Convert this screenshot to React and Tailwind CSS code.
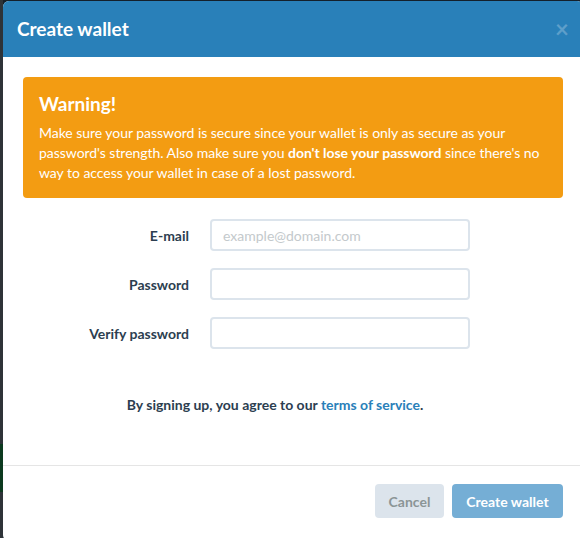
export default function App() {
  return (
    <div className="flex w-[580px] h-[538px] overflow-hidden bg-[#14202b] font-['Lato','Noto_Sans',sans-serif]">
      <div className="flex w-[3px] flex-none flex-col">
        <div className="h-[444px] bg-[#2e3338]" />
        <div className="h-[48px] bg-[#0c3a1f]" />
        <div className="flex-1 bg-[#2e3338]" />
      </div>
      <div className="mt-[1px] flex h-[540px] w-[580px] flex-none flex-col overflow-hidden rounded-[6px] bg-white">
        <div className="flex h-[56px] flex-none items-center justify-between bg-[#2980b9] pl-[14px] pr-[14px]">
          <h4 className="text-[19px] font-bold text-white">Create wallet</h4>
          <button type="button" className="text-[24px] font-bold leading-none text-white/25">
            ×
          </button>
        </div>

        <div className="px-[20px] pt-[20px]">
          <div className="rounded-[4px] bg-[#f39c12] px-[16px] pt-[14px] pb-[15px] text-white">
            <h4 className="text-[19px] font-bold leading-[26px]">Warning!</h4>
            <p className="mt-[6px] text-[14px] leading-[20px] tracking-[-0.04px]">
              Make sure your password is secure since your wallet is only as secure as your
              password's strength. Also make sure you <strong>don't lose your password</strong> since
              there's no way to access your wallet in case of a lost password.
            </p>
          </div>

          <form className="mt-[21px] flex flex-col gap-[17px]">
            {[
              { label: "E-mail", type: "email", placeholder: "example@domain.com" },
              { label: "Password", type: "password" },
              { label: "Verify password", type: "password" },
            ].map((f) => (
              <div key={f.label} className="flex items-center">
                <label className="w-[168px] pr-[2px] text-right text-[14px] font-bold text-[#2c3e50]">
                  {f.label}
                </label>
                <input
                  type={f.type}
                  placeholder={f.placeholder}
                  className="ml-[19px] h-[32px] w-[260px] rounded-[4px] border-2 border-[#dce4ec] px-[11px] text-[14px] text-[#2c3e50] outline-none placeholder:text-[#c4c9cc]"
                />
              </div>
            ))}
          </form>

          <p className="mt-[46px] mr-[36px] text-center text-[14px] font-bold leading-[20px] text-[#2c3e50]">
            By signing up, you agree to our{" "}
            <a className="text-[#2980b9]">terms of service</a>.
          </p>
        </div>

        <div className="mt-[50px] border-t border-[#e5e5e5] px-[20px] pt-[18px]">
          <div className="flex justify-end gap-[8px]">
            <button
              type="button"
              className="h-[34px] w-[69px] rounded-[4px] bg-[#dce4ec] text-[14px] font-bold text-[#8b9596]"
            >
              Cancel
            </button>
            <button
              type="button"
              className="h-[34px] w-[111px] rounded-[4px] bg-[#75aed5] text-[14px] font-bold text-white"
            >
              Create wallet
            </button>
          </div>
        </div>
      </div>
    </div>
  );
}
